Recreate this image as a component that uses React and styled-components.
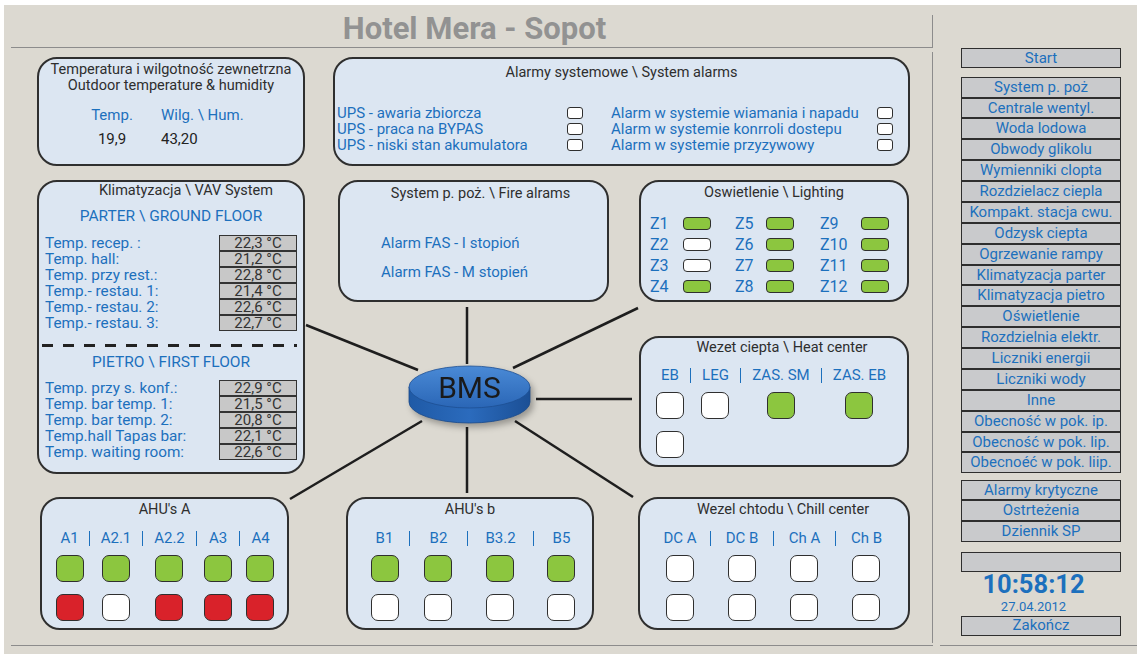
import React from 'react'
import styled, { createGlobalStyle } from 'styled-components'

const blue = '#1c70bd'
const ink = '#2f2f2f'
const beige = '#dcd9d1'
const panelFill = '#dce6f2'
const rule = '#8c8c8c'
const green = '#8cc63f'
const red = '#d9222a'

const GlobalStyle = createGlobalStyle`
  html, body { margin: 0; padding: 0; background: #fff; }
  body { font-family: Roboto, "Liberation Sans", sans-serif; }
  * { box-sizing: border-box; }
`

const Screen = styled.div`
  margin: 5px 0 0 4px;
  width: 1133px;
  height: 649px;
  background: ${beige};
  display: flex;
`

const MainColumn = styled.div`
  width: 929px;
  display: flex;
  flex-direction: column;
`

const TitleBar = styled.header`
  margin: 10px 0 0 7px;
  height: 33px;
  border-right: 1px solid ${rule};
  border-bottom: 1px solid ${rule};
  text-align: center;
  h1 {
    margin: 0;
    padding-left: 6px;
    font-size: 31px;
    line-height: 27px;
    font-weight: 700;
    color: #929292;
  }
`

const Board = styled.main`
  position: relative;
  margin-left: 7px;
  height: 598px;
  border-bottom: 1px solid ${rule};
  padding: 9px 0 0 26px;
  display: grid;
  grid-template-columns: 268px 333px 272px;
  grid-template-rows: 109px 122px 167px 133px;
  row-gap: 14px;
  align-items: start;
  justify-items: start;
  &::after {
    content: '';
    position: absolute;
    right: 0;
    top: 4px;
    bottom: 2px;
    width: 1px;
    background: ${rule};
  }
`

const Wires = styled.svg`
  position: absolute;
  left: 0;
  top: 0;
  width: 922px;
  height: 598px;
  z-index: 0;
  pointer-events: none;
`

const Panel = styled.section`
  position: relative;
  z-index: 1;
  background: ${panelFill};
  border: 2px solid ${ink};
  border-radius: 20px;
  grid-column: ${p => p.$col};
  grid-row: ${p => p.$row};
  margin-left: ${p => p.$ml || 0}px;
  margin-top: ${p => p.$mt || 0}px;
  width: ${p => p.$w}px;
  height: ${p => p.$h}px;
`

const PanelTitle = styled.h2`
  margin: 0;
  padding-top: ${p => p.$pt || 0}px;
  padding-left: ${p => p.$shift || 0}px;
  font-size: 14.5px;
  font-weight: 400;
  line-height: 16px;
  color: #2e2e2e;
  text-align: center;
`

/* outdoor */
const Readout = styled.div`
  display: grid;
  grid-template-columns: 80px auto;
  grid-auto-rows: 24px;
  column-gap: 9px;
  margin: 9px 0 0 33px;
  font-size: 15px;
  line-height: 24px;
`

const ReadHead = styled.div`
  color: ${blue};
  text-align: ${p => (p.$center ? 'center' : 'left')};
`

const ReadValue = styled.div`
  color: #222;
  text-align: ${p => (p.$center ? 'center' : 'left')};
`

/* alarms */
const AlarmList = styled.div`
  display: grid;
  grid-template-columns: 230px 44px 266px 16px;
  grid-auto-rows: 16px;
  align-items: center;
  margin: 24px 0 0 2px;
  font-size: 15px;
  line-height: 16px;
  color: ${blue};
`

const CheckBox = styled.span`
  display: block;
  width: 16px;
  height: 12px;
  background: #fff;
  border: 1.5px solid ${ink};
  border-radius: 3px;
`

/* fire */
const FireList = styled.div`
  display: flex;
  flex-direction: column;
  gap: 11px;
  margin: 32px 0 0 41px;
  font-size: 15px;
  line-height: 18px;
  color: ${blue};
`

/* lighting */
const ZoneGrid = styled.div`
  display: grid;
  grid-template-columns: 33px 52px 31px 54px 41px 28px;
  grid-auto-rows: 21px;
  align-items: center;
  margin: 12px 0 0 9px;
  font-size: 16px;
  color: ${blue};
`

const Led = styled.span`
  display: block;
  width: 28px;
  height: 13px;
  border: 1.5px solid ${ink};
  border-radius: 4px;
  background: ${p => (p.$on ? green : '#fff')};
`

/* VAV */
const FloorHead = styled.div`
  margin-top: ${p => p.$mt}px;
  font-size: 15.5px;
  line-height: 18px;
  color: ${blue};
  text-align: center;
`

const TempList = styled.div`
  margin: ${p => p.$mt}px 6px 0 6px;
`

const TempRow = styled.div`
  display: grid;
  grid-template-columns: 1fr 78px;
  height: 16px;
  align-items: center;
  font-size: 15.3px;
  color: ${blue};
`

const TempValue = styled.span`
  display: block;
  height: 16px;
  line-height: 15px;
  background: #c8c8c8;
  border: 1px solid #333;
  color: #333;
  text-align: center;
  font-size: 15px;
`

const Dashes = styled.div`
  height: 3px;
  margin: 14px 6px 0 3px;
  background: repeating-linear-gradient(to right, #222 0 11px, transparent 11px 21px);
`

/* unit grids: AHU, heat, chill */
const UnitGrid = styled.div`
  display: grid;
  grid-template-columns: ${p => p.$cols};
  grid-template-rows: 18px 35px 39px;
  justify-items: center;
  margin: ${p => p.$mt}px 0 0 ${p => p.$ml}px;
`

const UnitLabel = styled.div`
  justify-self: stretch;
  align-self: center;
  height: 15px;
  line-height: 15px;
  font-size: 15px;
  color: ${blue};
  text-align: center;
  white-space: nowrap;
  border-left: ${p => (p.$sep ? `1.5px solid ${blue}` : '0')};
`

const Lamp = styled.span`
  align-self: end;
  display: block;
  width: 28px;
  height: 27px;
  border: 1.5px solid ${ink};
  border-radius: 7px;
  background: ${p => (p.$state === 'on' ? green : p.$state === 'alarm' ? red : '#fff')};
`

/* BMS */
const BmsNode = styled.svg`
  position: relative;
  z-index: 1;
  grid-column: 2;
  grid-row: 3;
  margin: 48px 0 0 101px;
  width: 128px;
  height: 66px;
  overflow: visible;
  filter: drop-shadow(3px 4px 3px rgba(0, 0, 0, 0.3));
`

/* sidebar */
const Sidebar = styled.aside`
  flex: 1;
  margin-left: 7px;
  height: 641px;
  border-bottom: 1px solid ${rule};
  padding: 43px 0 0 21px;
  display: flex;
  flex-direction: column;
  align-items: flex-start;
`

const NavGroup = styled.div`
  display: flex;
  flex-direction: column;
  margin-top: ${p => p.$mt || 0}px;
`

const NavButton = styled.button`
  display: block;
  width: 160px;
  height: ${p => p.$h || 20}px;
  padding: 0;
  background: #c9cacc;
  border: 1px solid #2e2e2e;
  font-family: Roboto, "Liberation Sans", sans-serif;
  font-size: 15px;
  line-height: 1;
  color: ${blue};
  white-space: nowrap;
  overflow: hidden;
`

const Clock = styled.div`
  width: 160px;
  padding-right: 15px;
  margin-top: 2.3px;
  text-align: center;
  color: ${blue};
  strong {
    display: block;
    font-size: 25.5px;
    line-height: 20px;
    font-weight: 700;
  }
  span {
    display: block;
    margin-top: 5.7px;
    font-size: 13px;
    line-height: 14px;
  }
`

const links = [
  [306, 325, 418, 370],
  [467, 307, 467, 364],
  [513, 368, 638, 308],
  [536, 399, 632, 399],
  [422, 421, 290, 499],
  [467, 427, 467, 493],
  [515, 421, 633, 497],
]

const parter = [
  ['Temp. recep. :', '22,3'],
  ['Temp. hall:', '21,2'],
  ['Temp. przy rest.:', '22,8'],
  ['Temp.- restau. 1:', '21,4'],
  ['Temp.- restau. 2:', '22,6'],
  ['Temp.- restau. 3:', '22,7'],
]

const pietro = [
  ['Temp. przy s. konf.:', '22,9'],
  ['Temp. bar temp. 1:', '21,5'],
  ['Temp. bar temp. 2:', '20,8'],
  ['Temp.hall Tapas bar:', '22,1'],
  ['Temp. waiting room:', '22,6'],
]

const zones = [
  ['Z1', true], ['Z5', true], ['Z9', true],
  ['Z2', false], ['Z6', true], ['Z10', true],
  ['Z3', false], ['Z7', true], ['Z11', true],
  ['Z4', true], ['Z8', true], ['Z12', true],
]

const menu = [
  'System p. poż', 'Centrale wentyl.', 'Woda lodowa', 'Obwody glikolu', 'Wymienniki clopta',
  'Rozdzielacz ciepla', 'Kompakt. stacja cwu.', 'Odzysk ciepta', 'Ogrzewanie rampy',
  'Klimatyzacja parter', 'Klimatyzacja pietro', 'Oświetlenie', 'Rozdzielnia elektr.',
  'Liczniki energii', 'Liczniki wody', 'Inne', 'Obecność w pok. ip.', 'Obecność w pok. lip.',
  'Obecnoéć w pok. liip.',
]

function Units({ cols, ml, mt, labels, rows }) {
  return (
    <UnitGrid $cols={cols} $ml={ml} $mt={mt}>
      {labels.map((l, i) => <UnitLabel key={l} $sep={i > 0}>{l}</UnitLabel>)}
      {rows.flat().map((s, i) => <Lamp key={i} $state={s} />)}
    </UnitGrid>
  )
}

function TempBlock({ rows, mt }) {
  return (
    <TempList $mt={mt}>
      {rows.map(([label, v]) => (
        <TempRow key={label}>
          <span>{label}</span>
          <TempValue>{v} °C</TempValue>
        </TempRow>
      ))}
    </TempList>
  )
}

export default function App() {
  return (
    <>
      <GlobalStyle />
      <Screen>
        <MainColumn>
          <TitleBar><h1>Hotel Mera - Sopot</h1></TitleBar>
          <Board>
            <Wires viewBox="11 48 922 598">
              {links.map(([x1, y1, x2, y2], i) => (
                <line key={i} x1={x1} y1={y1} x2={x2} y2={y2} stroke="#1e1e1e" strokeWidth="2.5" />
              ))}
            </Wires>

            <Panel $col="1" $row="1" $w={268} $h={109}>
              <PanelTitle $pt={3}>Temperatura i wilgotność zewnetrzna<br />Outdoor temperature &amp; humidity</PanelTitle>
              <Readout>
                <ReadHead $center>Temp.</ReadHead>
                <ReadHead>Wilg. \ Hum.</ReadHead>
                <ReadValue $center>19,9</ReadValue>
                <ReadValue>43,20</ReadValue>
              </Readout>
            </Panel>

            <Panel $col="2 / 4" $row="1" $ml={28} $w={577} $h={109}>
              <PanelTitle $pt={6}>Alarmy systemowe \ System alarms</PanelTitle>
              <AlarmList>
                <span>UPS - awaria zbiorcza</span><CheckBox />
                <span>Alarm w systemie wiamania i napadu</span><CheckBox />
                <span>UPS - praca na BYPAS</span><CheckBox />
                <span>Alarm w systemie konrroli dostepu</span><CheckBox />
                <span>UPS - niski stan akumulatora</span><CheckBox />
                <span>Alarm w systemie przyzywowy</span><CheckBox />
              </AlarmList>
            </Panel>

            <Panel $col="1" $row="2 / 4" $w={268} $h={294}>
              <PanelTitle $pt={1} $shift={30}>Klimatyzacja \ VAV System</PanelTitle>
              <FloorHead $mt={8}>PARTER \ GROUND FLOOR</FloorHead>
              <TempBlock rows={parter} mt={9} />
              <Dashes />
              <FloorHead $mt={6}>PIETRO \ FIRST FLOOR</FloorHead>
              <TempBlock rows={pietro} mt={8} />
            </Panel>

            <Panel $col="2" $row="2" $ml={33} $w={271} $h={122}>
              <PanelTitle $pt={4} $shift={14}>System p. poż. \ Fire alrams</PanelTitle>
              <FireList>
                <span>Alarm FAS - I stopioń</span>
                <span>Alarm FAS - M stopień</span>
              </FireList>
            </Panel>

            <Panel $col="3" $row="2" $ml={1} $w={270} $h={122}>
              <PanelTitle $pt={3}>Oswietlenie \ Lighting</PanelTitle>
              <ZoneGrid>
                {zones.map(([z, on]) => (
                  <React.Fragment key={z}>
                    <span>{z}</span>
                    <Led $on={on} />
                  </React.Fragment>
                ))}
              </ZoneGrid>
            </Panel>

            <BmsNode viewBox="0 0 128 66">
              <defs>
                <linearGradient id="bmsTop" x1="0" y1="0" x2="0" y2="1">
                  <stop offset="0" stopColor="#4a8ad6" />
                  <stop offset="1" stopColor="#2a66b6" />
                </linearGradient>
                <linearGradient id="bmsSide" x1="0" y1="0" x2="1" y2="0">
                  <stop offset="0" stopColor="#1f5aa6" />
                  <stop offset="0.5" stopColor="#2b6bbd" />
                  <stop offset="1" stopColor="#1b4f95" />
                </linearGradient>
              </defs>
              <path d="M3 23 L3 38 A60.5 21 0 0 0 124 38 L124 23 Z" fill="url(#bmsSide)" stroke="#1a4a8a" strokeWidth="0.8" />
              <ellipse cx="63.5" cy="23" rx="60.5" ry="21" fill="url(#bmsTop)" stroke="#1d4f93" strokeWidth="0.8" />
              <text x="63.5" y="34" textAnchor="middle" fontFamily="Roboto, sans-serif" fontSize="30" fill="#1a1a1a">BMS</text>
            </BmsNode>

            <Panel $col="3" $row="3" $ml={1} $mt={20} $w={270} $h={131}>
              <PanelTitle $pt={2} $shift={16}>Wezet ciepta \ Heat center</PanelTitle>
              <Units
                cols="40px 50px 81px 76px"
                ml={9}
                mt={10}
                labels={['EB', 'LEG', 'ZAS. SM', 'ZAS. EB']}
                rows={[['off', 'off', 'on', 'on'], ['off']]}
              />
            </Panel>

            <Panel $col="1" $row="4" $ml={3} $w={249} $h={133}>
              <PanelTitle $pt={3}>AHU's A</PanelTitle>
              <Units
                cols="39px 53px 54px 43px 42px"
                ml={8}
                mt={11}
                labels={['A1', 'A2.1', 'A2.2', 'A3', 'A4']}
                rows={[['on', 'on', 'on', 'on', 'on'], ['alarm', 'off', 'alarm', 'alarm', 'alarm']]}
              />
            </Panel>

            <Panel $col="2" $row="4" $ml={41} $w={248} $h={133}>
              <PanelTitle $pt={3}>AHU's b</PanelTitle>
              <Units
                cols="49px 58px 66px 56px"
                ml={12}
                mt={11}
                labels={['B1', 'B2', 'B3.2', 'B5']}
                rows={[['on', 'on', 'on', 'on'], ['off', 'off', 'off', 'off']]}
              />
            </Panel>

            <Panel $col="3" $row="4" $w={272} $h={133}>
              <PanelTitle $pt={3} $shift={18}>Wezel chtodu \ Chill center</PanelTitle>
              <Units
                cols="60px 63px 62px 62px"
                ml={10}
                mt={11}
                labels={['DC A', 'DC B', 'Ch A', 'Ch B']}
                rows={[['off', 'off', 'off', 'off'], ['off', 'off', 'off', 'off']]}
              />
            </Panel>
          </Board>
        </MainColumn>

        <Sidebar>
          <NavButton>Start</NavButton>
          <NavGroup $mt={8.7}>
            {menu.map(m => <NavButton key={m} $h={20.88}>{m}</NavButton>)}
          </NavGroup>
          <NavGroup $mt={6.6}>
            <NavButton $h={20.56}>Alarmy krytyczne</NavButton>
            <NavButton $h={20.56}>Ostrteżenia</NavButton>
            <NavButton $h={20.56}>Dziennik SP</NavButton>
          </NavGroup>
          <NavGroup $mt={10.3}>
            <NavButton aria-label="status" />
          </NavGroup>
          <Clock>
            <strong>10:58:12</strong>
            <span>27.04.2012</span>
          </Clock>
          <NavGroup $mt={1.7}>
            <NavButton>Zakończ</NavButton>
          </NavGroup>
        </Sidebar>
      </Screen>
    </>
  )
}
